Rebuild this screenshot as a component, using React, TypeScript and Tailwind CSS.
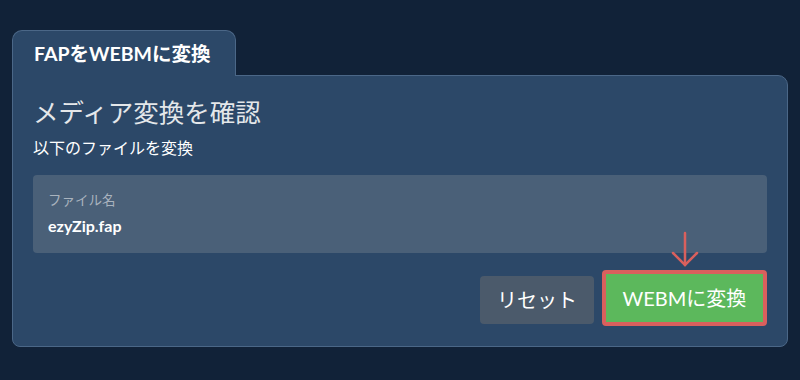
export default function App() {
  return (
    <div
      className="h-[380px] w-[800px] bg-[#112238] px-[12px] pt-[30px]"
      style={{ fontFamily: "Lato, 'Noto Sans CJK JP', sans-serif" }}
    >
      <div className="relative z-10 -mb-px flex h-[46px] w-[224px] items-center rounded-t-[10px] border border-b-0 border-[#4b6787] bg-[#2c4868] pl-[21px]">
        <span className="text-[19.5px] font-bold text-white">FAPをWEBMに変換</span>
      </div>
      <div className="h-[272px] rounded-b-[8px] rounded-tr-[10px] border border-[#4b6787] bg-[#2c4868] px-[20px] pt-[17px]">
        <h1 className="text-[25.5px] leading-[38px] text-[#e4e7ea]">メディア変換を確認</h1>
        <p className="mt-[6px] text-[16px] leading-[22px] text-white">以下のファイルを変換</p>
        <div className="mt-[16px] h-[78px] rounded-[4px] bg-[#4a6078] px-[15px] pt-[15px]">
          <div className="text-[13.5px] leading-[20px] text-[#a9b3be]">ファイル名</div>
          <div className="mt-[6px] text-[16px] font-bold leading-[20px] text-white">ezyZip.fap</div>
        </div>
        <div className="mt-[17px] flex items-center justify-end gap-[8px]">
          <button className="mt-[4px] h-[48px] w-[114px] rounded-[4px] bg-[#4b5a6b] text-[20px] text-white">
            リセット
          </button>
          <div className="relative">
            <svg
              className="absolute left-1/2 top-[-39px] -translate-x-1/2"
              width="30"
              height="38"
              viewBox="0 0 30 38"
              fill="none"
              stroke="#d9605d"
              strokeWidth="2.5"
              strokeLinecap="round"
            >
              <path d="M15 2 V34" />
              <path d="M3 22 L15 34 L27 22" />
            </svg>
            <button className="h-[56px] w-[165px] rounded-[4px] border-[4px] border-[#d9605d] bg-[#5cb85c] text-[20px] text-white">
              WEBMに変換
            </button>
          </div>
        </div>
      </div>
    </div>
  );
}
